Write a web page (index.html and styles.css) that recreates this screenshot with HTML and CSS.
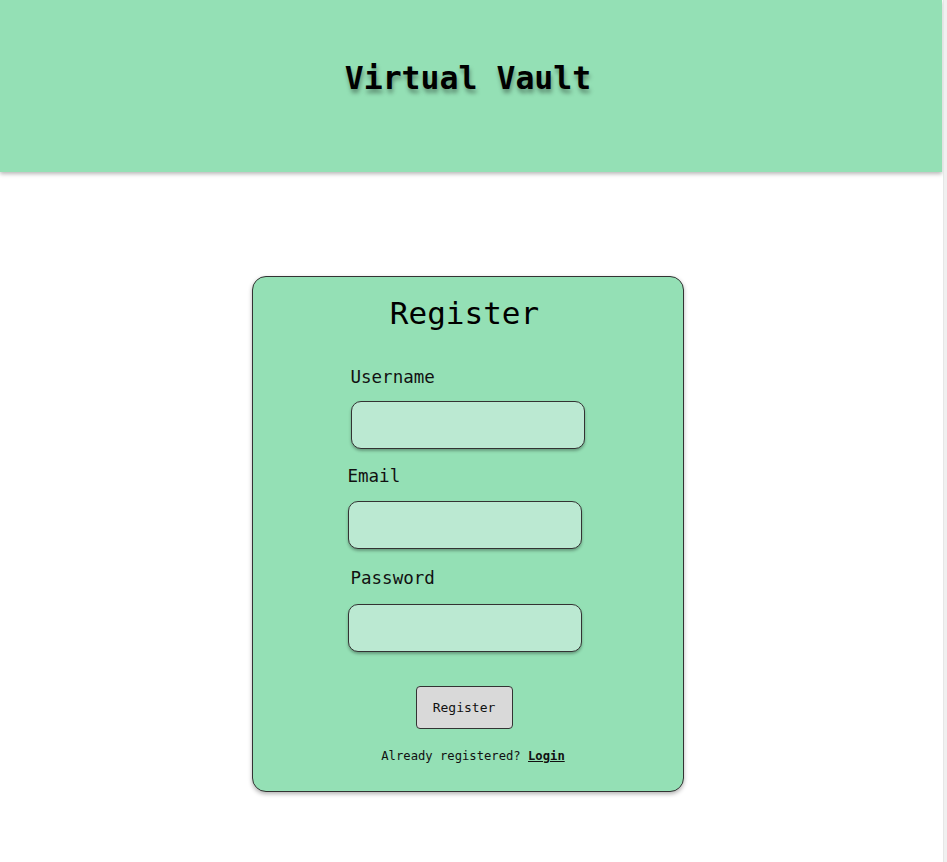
FILE: index.html
```html
<!DOCTYPE html>
<html lang="en">
<head>
<meta charset="utf-8">
<title>Virtual Vault - Register</title>
<link rel="stylesheet" href="styles.css">
</head>
<body>
<div class="page">
  <header class="site-header">
    <h1 class="site-title">Virtual Vault</h1>
  </header>
  <main class="main">
    <form class="card">
      <h2 class="card-title">Register</h2>
      <div class="field field-user">
        <label class="field-label" for="username">Username</label>
        <input class="field-input" id="username" type="text">
      </div>
      <div class="field field-shift field-email">
        <label class="field-label" for="email">Email</label>
        <input class="field-input" id="email" type="email">
      </div>
      <div class="field field-shift field-pw">
        <label class="field-label label-pw" for="password">Password</label>
        <input class="field-input" id="password" type="password">
      </div>
      <button class="submit" type="button">Register</button>
      <p class="alt">Already registered? <a class="alt-link" href="#">Login</a></p>
    </form>
  </main>
</div>
<div class="track"></div>
</body>
</html>
```
FILE: styles.css
```css
html, body {
  margin: 0;
  padding: 0;
  height: 100%;
}
body {
  display: flex;
  background: #ffffff;
  font-family: "DejaVu Sans Mono", "Liberation Mono", monospace;
  color: #000;
  overflow: hidden;
}
.page {
  flex: 1;
  min-width: 0;
}
.track {
  width: 3px;
  background: #f0f0f0;
  border-left: 1px solid #e6e6e6;
}
.site-header {
  height: 172px;
  background: #94e0b5;
  box-shadow: 0 2px 4px rgba(0, 0, 0, 0.28);
  display: flex;
  justify-content: center;
  margin-right: 1px;
}
.site-title {
  margin: 58px 0 0;
  font-size: 31.5px;
  line-height: 40px;
  font-weight: bold;
  text-shadow: 1px 4px 4px rgba(0, 0, 0, 0.35);
  height: 40px;
  margin-left: -6px;
}
.main {
  display: flex;
  justify-content: center;
  padding-top: 104px;
}
.card {
  width: 430px;
  height: 514px;
  background: #94e0b5;
  border: 1px solid #333;
  border-radius: 14px;
  box-shadow: 0 2px 4px rgba(0, 0, 0, 0.3);
  display: flex;
  flex-direction: column;
  align-items: center;
  margin-left: -8px;
}
.card-title {
  margin: 16px 0 0 -6px;
  font-size: 31px;
  line-height: 40px;
  font-weight: normal;
}
.field {
  width: 234px;
  display: flex;
  flex-direction: column;
}
.field-user {
  margin-top: 32px;
}
.field-shift {
  margin-right: 6px;
}
.field-email {
  margin-top: 15px;
}
.field-pw {
  margin-top: 17px;
}
.field-label {
  font-size: 17.5px;
  line-height: 24px;
  color: #111;
}
.label-pw {
  padding-left: 3px;
}
.field-input {
  margin-top: 12px;
  height: 48px;
  box-sizing: border-box;
  background: #bbe9d2;
  border: 1px solid #333;
  border-radius: 10px;
  box-shadow: 0 2px 3px rgba(0, 0, 0, 0.3);
  outline: none;
  padding: 0 10px;
  font-family: inherit;
}
.field-email .field-input {
  margin-top: 13px;
}
.field-pw .field-input {
  margin-top: 14px;
}
.submit {
  margin-top: 34px;
  margin-left: -7px;
  width: 97px;
  height: 43px;
  background: #d9d9d9;
  border: 1px solid #333;
  border-radius: 4px;
  font-family: inherit;
  font-size: 13px;
  color: #111;
  padding: 0;
}
.alt {
  margin: 19px 0 0 11px;
  font-size: 12.2px;
  line-height: 16px;
  color: #111;
}
.alt-link {
  color: #111;
  font-weight: bold;
  text-decoration: underline;
}
```
